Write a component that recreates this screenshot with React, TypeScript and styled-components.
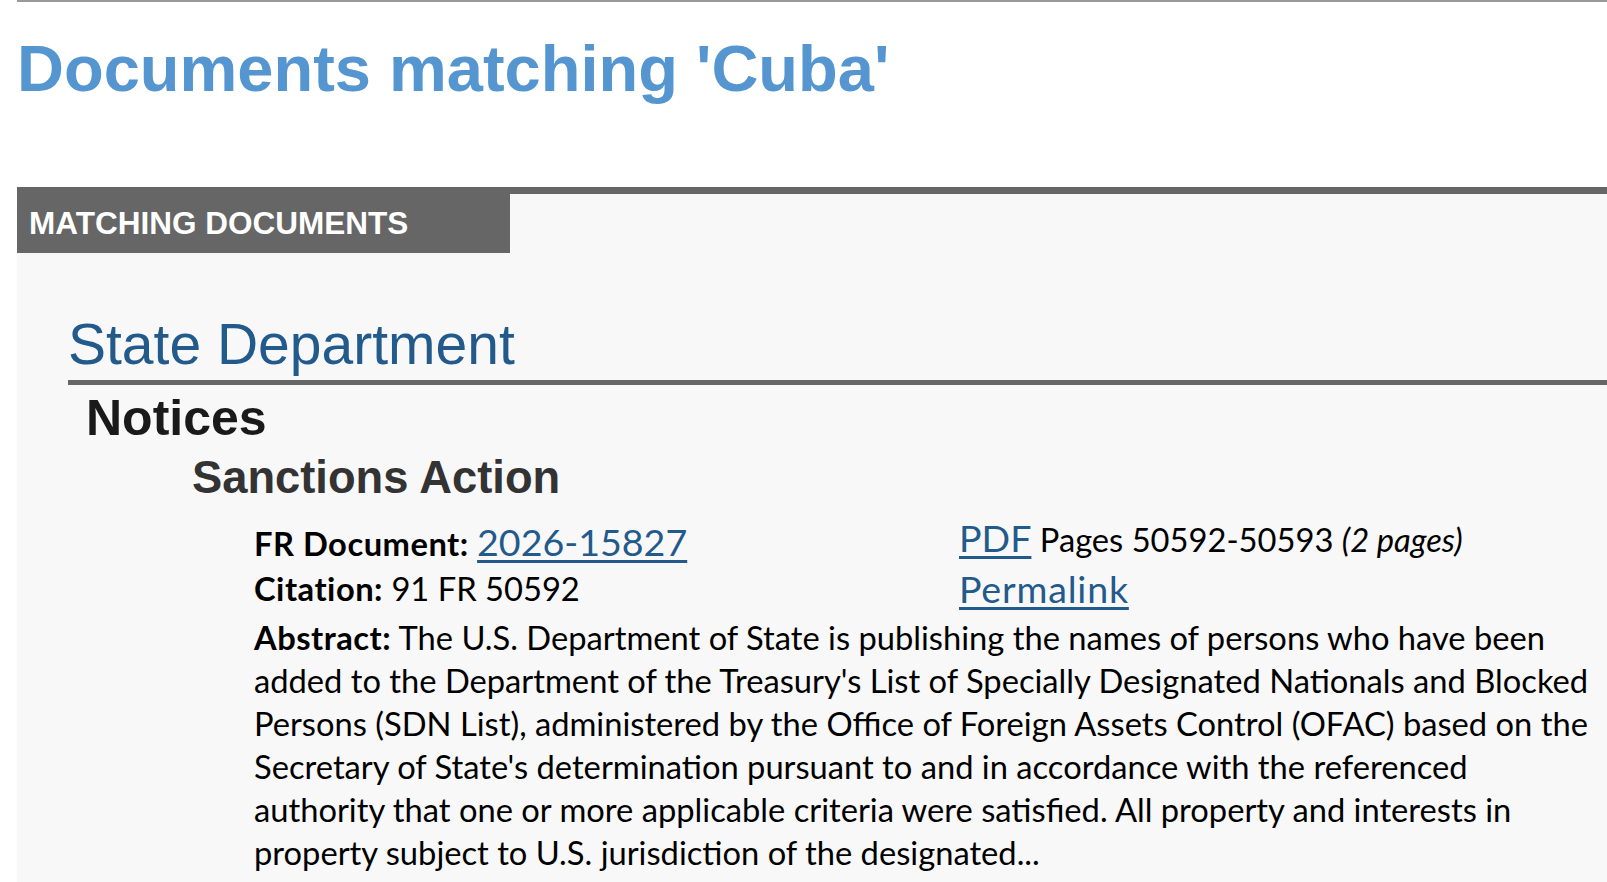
import styled, { createGlobalStyle } from "styled-components"

const GlobalStyle = createGlobalStyle`
  body {
    margin: 0;
    background: #ffffff;
    font-family: "Liberation Sans", Arial, sans-serif;
  }
  * { box-sizing: border-box; }
`

const Page = styled.div`
  padding-left: 17px;
`

const TopRule = styled.div`
  height: 2px;
  background-color: #999999;
`

const Title = styled.h1`
  margin: 35px 0 0 0;
  font-size: 65px;
  line-height: 64px;
  font-weight: bold;
  color: #5596d0;
`

const Panel = styled.section`
  margin-top: 86px;
  border-top: 7px solid #666666;
  background-color: #f8f8f8;
  padding-bottom: 40px;
`

const Tab = styled.div`
  width: 493px;
  height: 59px;
  padding-left: 12px;
  background-color: #666666;
  color: #ffffff;
  font-size: 31.5px;
  line-height: 59px;
  font-weight: bold;
  text-transform: uppercase;
`

const Agency = styled.div`
  margin-left: 51px;
  padding-top: 59px;
`

const AgencyName = styled.h2`
  margin: 0;
  padding-bottom: 4px;
  border-bottom: 5px solid #666666;
  font-size: 57px;
  line-height: 64px;
  font-weight: normal;
  color: #225a8c;
`

const DocType = styled.div`
  padding-left: 18px;
`

const DocTypeName = styled.h3`
  margin: 5px 0 0 0;
  font-size: 50px;
  line-height: 56px;
  font-weight: bold;
  color: #1a1a1a;
`

const Topic = styled.div`
  padding-left: 106px;
`

const TopicName = styled.h4`
  margin: 7px 0 0 0;
  font-size: 45.3px;
  line-height: 50px;
  font-weight: bold;
  color: #333333;
`

const Entry = styled.div`
  margin-top: 11px;
  padding-left: 62px;
  padding-right: 13px;
  font-family: Lato, "Open Sans", sans-serif;
  font-size: 32.7px;
  color: #000000;
`

const Meta = styled.div`
  display: grid;
  grid-template-columns: 705px 1fr;
`

const MetaColumn = styled.div<{ $offset?: number; $lines: number[] }>`
  padding-top: ${p => p.$offset ?? 0}px;
  & > div:nth-child(1) { line-height: ${p => p.$lines[0]}px; }
  & > div:nth-child(2) { line-height: ${p => p.$lines[1]}px; }
`

const Label = styled.strong`
  font-weight: bold;
  letter-spacing: 0.5px;
`

const Link = styled.a<{ $wide?: boolean }>`
  font-size: 37.6px;
  line-height: 1;
  letter-spacing: ${p => (p.$wide ? "0.8px" : "0")};
  color: #225a8c;
  text-decoration: underline;
  text-underline-offset: 4px;
`

const Abstract = styled.p`
  margin: 0;
  line-height: 43px;
`

const App = () => {
  return (
    <>
      <GlobalStyle />
      <Page>
        <TopRule />
        <Title>Documents matching 'Cuba'</Title>
        <Panel>
          <Tab>Matching Documents</Tab>
          <Agency>
            <AgencyName>State Department</AgencyName>
            <DocType>
              <DocTypeName>Notices</DocTypeName>
              <Topic>
                <TopicName>Sanctions Action</TopicName>
                <Entry>
                  <Meta>
                    <MetaColumn $offset={7} $lines={[46, 44]}>
                      <div><Label>FR Document:</Label> <Link href="#">2026-15827</Link></div>
                      <div><Label>Citation:</Label> 91 FR 50592</div>
                    </MetaColumn>
                    <MetaColumn $lines={[51, 51]}>
                      <div><Link href="#">PDF</Link> Pages 50592-50593 <i>(2 pages)</i></div>
                      <div><Link href="#" $wide>Permalink</Link></div>
                    </MetaColumn>
                  </Meta>
                  <Abstract>
                    <Label>Abstract:</Label> The U.S. Department of State is publishing the names of persons who have been added to the Department of the Treasury's List of Specially Designated Nationals and Blocked Persons (SDN List), administered by the Office of Foreign Assets Control (OFAC) based on the Secretary of State's determination pursuant to and in accordance with the referenced authority that one or more applicable criteria were satisfied. All property and interests in property subject to U.S. jurisdiction of the designated...
                  </Abstract>
                </Entry>
              </Topic>
            </DocType>
          </Agency>
        </Panel>
      </Page>
    </>
  )
}

export default App
